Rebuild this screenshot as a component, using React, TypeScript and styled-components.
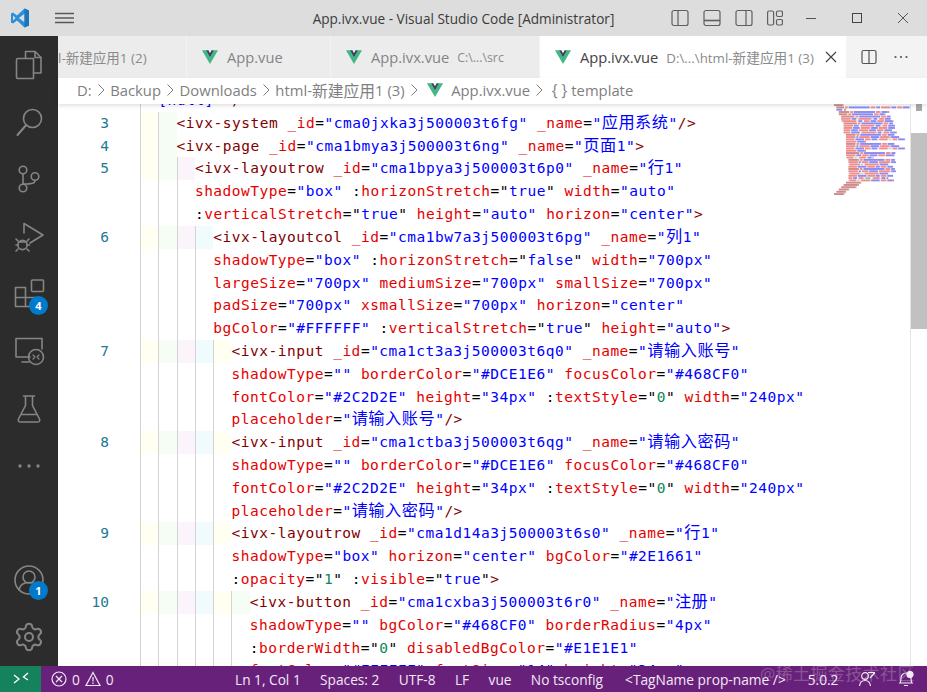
import React from "react";
import styled, { createGlobalStyle } from "styled-components";
import { Settings } from "lucide-react";

const Global = createGlobalStyle`
  html, body { margin: 0; padding: 0; background: #fff; }
  #root { width: 927px; height: 692px; overflow: hidden; }
`;

const UI = `"Open Sans", "Noto Sans CJK SC", sans-serif`;
const MONO = `"DejaVu Sans Mono", "Noto Sans CJK SC", monospace`;

const Root = styled.div`
  width: 927px; height: 692px; display: flex; flex-direction: column;
  font-family: ${UI}; overflow: hidden;
`;
const TitleBar = styled.header`
  height: 36px; flex: none; background: #dddddd; display: flex; align-items: center; position: relative; color: #444;
`;
const Logo = styled.svg`width: 20px; height: 20px; margin: 0 0 0 10px;`;
const Burger = styled.svg`width: 20px; height: 14px; margin-left: 25px;`;
const Title = styled.div`
  position: absolute; left: 0; right: 0; top: 9px; text-align: center; font-size: 13.6px; line-height: 20px; color: #3b3b3b;
`;
const TitleIcons = styled.div`
  margin-left: 596px; display: flex; align-items: center; gap: 14px;
`;
const WinIcons = styled.div`
  margin-left: 22px; display: flex; align-items: center; gap: 34px;
`;
const Main = styled.div`flex: 1; display: flex; min-height: 0;`;
const Activity = styled.nav`
  width: 58px; flex: none; background: #2c2c2c; display: flex; flex-direction: column;
`;
const ActivityItem = styled.div<{ $push?: boolean }>`
  height: 57.4px; flex: none; display: flex; align-items: center; justify-content: center; position: relative;
  margin-top: ${p => (p.$push ? "auto" : "0")}; color: #858585;
`;
const Badge = styled.span`
  position: absolute; left: 29px; top: 30px; width: 19px; height: 19px; border-radius: 50%;
  background: #007acc; color: #fff; font: 700 11px/19px ${UI}; text-align: center;
`;
const Right = styled.div`flex: 1; min-width: 0; display: flex; flex-direction: column;`;
const Tabs = styled.div`
  height: 42px; flex: none; background: #f3f3f3; display: flex; overflow: hidden;
`;
const Tab = styled.div<{ $w: number; $active?: boolean; $flush?: boolean }>`
  width: ${p => p.$w}px; flex: none; display: flex; align-items: center; padding-left: ${p => (p.$flush ? 0 : 14)}px; box-sizing: border-box;
  background: ${p => (p.$active ? "#fff" : "#ececec")};
  border-right: 1px solid #f3f3f3; white-space: nowrap; overflow: hidden;
  color: ${p => (p.$active ? "#444" : "#858585")}; font-size: 14.7px; position: relative;
`;
const ClippedLabel = styled.span`
  font-size: 13.5px; color: #8a8a8a;
`;
const VueMark = styled.svg`width: 18px; height: 18px; flex: none; margin-right: 8px;`;
const TabDetail = styled.span<{ $size: number }>`font-size: ${p => p.$size}px; color: #8a8a8a; margin-left: 8px;`;
const TabClose = styled.svg`width: 14px; height: 14px; margin-left: 10px; flex: none;`;
const TabActions = styled.div`
  flex: 1; display: flex; align-items: center; padding-left: 14px; gap: 16px; background: #f3f3f3;
`;
const Breadcrumb = styled.div`
  height: 26px; flex: none; background: #fff; display: flex; align-items: center; padding-left: 19px; padding-bottom: 2px; box-sizing: border-box;
  font-size: 14.8px; color: #7f7f7f; white-space: nowrap; position: relative; z-index: 2;
  box-shadow: 0 2px 4px rgba(0,0,0,.12);
`;
const Crumb = styled.span`display: inline-flex; align-items: center;`;
const CrumbSep = styled.svg`width: 16px; height: 16px; margin: 0 1.3px 0 1.300px; flex: none;`;
const CrumbVue = styled.svg`width: 18px; height: 18px; margin: 0 7px 0 3px; flex: none;`;
const Braces = styled.span`margin: 0 4px 0 3px; font-size: 15.5px;`;
const Cjk = styled.span<{ $s: number }>`font-size: ${p => p.$s}px;`;
const Editor = styled.div`flex: 1; min-height: 0; overflow: hidden; position: relative; background: #fff;`;
const Lines = styled.div`margin-top: -15px;`;
const Row = styled.div`
  height: 22.82px; display: flex; white-space: pre; font: 14.5px/22.82px ${MONO}; letter-spacing: 0.51px;
`;
const LineNo = styled.div`
  width: 51px; margin-right: 31px; flex: none; text-align: right; color: #237893; letter-spacing: 0;
`;
const Guide = styled.div<{ $tint?: string }>`
  width: 18.3px; flex: none; box-sizing: border-box; border-left: 1px solid #d3d3d3;
  background: ${p => p.$tint || "transparent"};
`;
const Tok = styled.span<{ $k: string }>`
  color: ${p => ({ tag: "#800000", attr: "#e50000", val: "#0000ff", num: "#098658", plain: "#000" } as Record<string, string>)[p.$k]};
`;
const MinimapBox = styled.svg`
  position: absolute; left: 776px; top: 0; width: 76px; height: 100px; z-index: 1; background: #fff; filter: blur(.35px);
`;
const ScrollTrack = styled.div`
  position: absolute; right: 0; top: 0; bottom: 0; width: 17px; box-sizing: border-box; border-left: 1px solid #e4e4e4; background: #fff; z-index: 1;
`;
const ScrollMark = styled.div`position: absolute; left: 5px; top: 0; width: 6px; height: 7px; background: #a9a9a9;`;
const ScrollThumb = styled.div`position: absolute; left: 0; right: 0; top: 29px; height: 196px; background: #c1c1c1;`;
const Status = styled.footer`
  height: 26px; flex: none; background: #68217a; color: #f3e9f5; display: flex; align-items: center;
  font-size: 13.7px; white-space: nowrap; position: relative; z-index: 3;
`;
const Remote = styled.div`
  width: 41px; height: 100%; background: #16825d; display: flex; align-items: center; justify-content: center;
`;
const Problems = styled.div`
  display: flex; align-items: center; gap: 5px; margin-left: 10px; width: 184px; flex: none;
`;
const StatusItem = styled.span<{ $gap?: number }>`margin-right: ${p => p.$gap ?? 19.4}px; display: inline-flex; align-items: center;`;
const TagHint = styled(StatusItem)`font-size: 13.75px;`;
const Watermark = styled.span`
  position: absolute; left: 760px; top: -3px; font-size: 17px; line-height: 22px; color: rgba(255,255,255,.24); letter-spacing: .4px;
`;

const strokeProps = { fill: "none", stroke: "currentColor", strokeWidth: 1.6, strokeLinecap: "round", strokeLinejoin: "round" } as const;

const Vue = () => (
  <>
    <path d="M1 2.500h4.200L9.500 10l4.300-7.500H18L9.500 17 1 2.500Z" fill="#41b883" />
    <path d="M5.200 2.500h2.600L9.500 5.600l1.700-3.100h2.600L9.500 10 5.200 2.500Z" fill="#35495e" />
  </>
);

const Icon = ({ children }: { children: React.ReactNode }) => (
  <svg width="32" height="32" viewBox="0 0 32 32" {...strokeProps}>{children}</svg>
);

const TOP_ICONS: React.ReactNode[] = [
  <Icon><path d="M12.500 9V2.500h9.500l6 6v15.500h-7.500" /><path d="M22 2.500V8.500h6" /><path d="M3.500 11a1.500 1.500 0 0 1 1.500-1.500h15.500V29.500H5A1.500 1.500 0 0 1 3.500 28Z" /></Icon>,
  <Icon><circle cx="19.500" cy="12.500" r="9" /><path d="M13.200 19 4.500 29" strokeWidth="2" /></Icon>,
  <Icon><circle cx="10" cy="7" r="3.800" /><circle cx="22" cy="13.500" r="3.800" /><circle cx="10" cy="25" r="3.800" /><path d="M10 11v10" /><path d="M22 17.500c0 2.500-2 3.500-12 3.500" /></Icon>,
  <Icon><path d="M11 12V2.500L30 14 17 22" /><circle cx="9.500" cy="24" r="4.600" /><path d="M5 20l-2-2M14 20l2-2M3 24h2M14 24h2.500M5 28l-2 2M14 28l2 2M5.500 21h8" /></Icon>,
  <Icon><path d="M2.500 9.500h10v10h10v9h-20Z" /><path d="M2.500 19.500h10v9" /><rect x="18.500" y="2" width="12" height="11.500" rx="1" /></Icon>,
  <Icon><path d="M17 21H3V2.500h26V13" /><path d="M9 26h7" /><circle cx="23" cy="21" r="7.500" /><path d="M20 19l2 2-2 2M26 19l-2 2 2 2" strokeWidth="1.200" /></Icon>,
  <Icon><path d="M10.500 3h11M12.500 3v9.500L5.500 26c-.8 1.600.2 3 2 3h17c1.800 0 2.800-1.400 2-3l-7-13.500V3" /><path d="M8.500 21.500h15" /></Icon>,
  <svg width="32" height="32" viewBox="0 0 32 32" fill="currentColor"><circle cx="7" cy="16" r="1.700" /><circle cx="16" cy="16" r="1.700" /><circle cx="25" cy="16" r="1.700" /></svg>,
];

type Line = { n?: number; i: number; t: string };
const RAW: Line[] = [
  { i: 1, t: `[null]" />` },
  { n: 3, i: 2, t: `<ivx-system _id="cma0jxka3j500003t6fg" _name="应用系统"/>` },
  { n: 4, i: 2, t: `<ivx-page _id="cma1bmya3j500003t6ng" _name="页面1">` },
  { n: 5, i: 3, t: `<ivx-layoutrow _id="cma1bpya3j500003t6p0" _name="行1"` },
  { i: 3, t: `shadowType="box" :horizonStretch="true" width="auto"` },
  { i: 3, t: `:verticalStretch="true" height="auto" horizon="center">` },
  { n: 6, i: 4, t: `<ivx-layoutcol _id="cma1bw7a3j500003t6pg" _name="列1"` },
  { i: 4, t: `shadowType="box" :horizonStretch="false" width="700px"` },
  { i: 4, t: `largeSize="700px" mediumSize="700px" smallSize="700px"` },
  { i: 4, t: `padSize="700px" xsmallSize="700px" horizon="center"` },
  { i: 4, t: `bgColor="#FFFFFF" :verticalStretch="true" height="auto">` },
  { n: 7, i: 5, t: `<ivx-input _id="cma1ct3a3j500003t6q0" _name="请输入账号"` },
  { i: 5, t: `shadowType="" borderColor="#DCE1E6" focusColor="#468CF0"` },
  { i: 5, t: `fontColor="#2C2D2E" height="34px" :textStyle="0" width="240px"` },
  { i: 5, t: `placeholder="请输入账号"/>` },
  { n: 8, i: 5, t: `<ivx-input _id="cma1ctba3j500003t6qg" _name="请输入密码"` },
  { i: 5, t: `shadowType="" borderColor="#DCE1E6" focusColor="#468CF0"` },
  { i: 5, t: `fontColor="#2C2D2E" height="34px" :textStyle="0" width="240px"` },
  { i: 5, t: `placeholder="请输入密码"/>` },
  { n: 9, i: 5, t: `<ivx-layoutrow _id="cma1d14a3j500003t6s0" _name="行1"` },
  { i: 5, t: `shadowType="box" horizon="center" bgColor="#2E1661"` },
  { i: 5, t: `:opacity="1" :visible="true">` },
  { n: 10, i: 6, t: `<ivx-button _id="cma1cxba3j500003t6r0" _name="注册"` },
  { i: 6, t: `shadowType="" bgColor="#468CF0" borderRadius="4px"` },
  { i: 6, t: `:borderWidth="0" disabledBgColor="#E1E1E1"` },
  { i: 6, t: `fontColor="#FFFFFF" fontSize="14" height="34px"` },
];

type T = { k: string; s: string };
function tokenize(line: string): T[] {
  const re = /(<\/?[\w-]+|\/?>|:|[\w]+(?==)|=|"[^"]*"|\[null\]|\s+|.)/g;
  const out: T[] = [];
  let bound = false;
  for (const m of line.match(re) || []) {
    if (/^<|^\/?>$/.test(m)) out.push({ k: "tag", s: m });
    else if (m === ":") { out.push({ k: "plain", s: m }); bound = true; }
    else if (/^\w+$/.test(m)) out.push({ k: "attr", s: m });
    else if (m === "[null]") out.push({ k: "val", s: m });
    else if (/^".*"$/.test(m)) {
      if (bound) {
        const inner = m.slice(1, -1);
        out.push({ k: "plain", s: '"' }, { k: /^\d/.test(inner) ? "num" : "val", s: inner }, { k: "plain", s: '"' });
      } else out.push({ k: "val", s: m });
      bound = false;
    } else out.push({ k: "plain", s: m });
  }
  return out;
}

const withCjk = (s: string, size: number) =>
  s.split(/([\u4e00-\u9fff]+)/).map((part, i) =>
    i % 2 ? <Cjk key={i} $s={size}>{part}</Cjk> : part
  );

const TINTS = ["#fffff2", "#f6fdf4", "#fbf5fb", "#f0fbfd", "#fffff2", "#f6fdf4"];

const TAIL: Line[] = [
  { i: 6, t: `text="注册" :width="240px" :visible="true"/>` },
  { i: 6, t: `:opacity="1" hoverColor="#468CF0" margin="0px"/>` },
  { i: 5, t: `</ivx-layoutrow>` },
  { i: 4, t: `</ivx-layoutcol>` },
  { i: 3, t: `</ivx-layoutrow>` },
  { i: 2, t: `</ivx-page>` },
  { i: 1, t: `</ivx-app>` },
  { i: 0, t: `</template>` },
];
const MINI: Line[] = [
  { i: 0, t: `<template>` },
  { i: 1, t: `<ivx-app _id="cma0jxka3j500003t6f0" _name="应用" shadowType="box" width="700px"` },
  { i: 1, t: `[null]" />` },
  ...RAW.slice(1),
  ...RAW.slice(22),
  ...TAIL,
];
const MINI_COL: Record<string, string> = { tag: "#cf8a8a", attr: "#f08c8c", val: "#8a8af2", num: "#8fc7a8", plain: "#ddd" };

const Minimap = () => {
  const rects: React.ReactNode[] = [];
  MINI.forEach((l, r) => {
    let x = l.i * 2.4;
    tokenize(l.t).forEach((t, j) => {
      const w = t.s.length * 0.95;
      if (t.s.trim()) rects.push(<rect key={`${r}-${j}`} x={x} y={r * 2.28 + 0.2} width={w} height={1.9} fill={MINI_COL[t.k]} />);
      x += w;
    });
  });
  return <MinimapBox viewBox="0 0 76 100">{rects}</MinimapBox>;
};

const Sep = () => (
  <CrumbSep viewBox="0 0 16 16" fill="none" stroke="#7f7f7f" strokeWidth="1"><path d="M5.500 2.500 11 8l-5.500 5.500" /></CrumbSep>
);

export default function App() {
  return (
    <Root>
      <Global />
      <TitleBar>
        <Logo viewBox="0 0 20 20">
          <path d="M14.500 0.600 7 7.500 3 4.500 1 5.500v9l2 1 4-3 7.500 6.900L19 17.500v-15Z" fill="#2a8fdc" />
          <path d="M14.500 5.800 8.800 10l5.700 4.200ZM3 7.400v5.200L5.600 10Z" fill="#dddddd" />
          <path d="M14.500 .6 19 2.500v15l-4.500 1.900Z" fill="#1b75bb" />
        </Logo>
        <Burger viewBox="0 0 20 14" stroke="#5a5a5a" strokeWidth="1.300"><path d="M0 2.500h19M0 7h19M0 11.500h19" /></Burger>
        <Title>App.ivx.vue - Visual Studio Code [Administrator]</Title>
        <TitleIcons>
          <svg width="18" height="18" viewBox="0 0 18 18" fill="none" stroke="#5f5f5f" strokeWidth="1.200"><rect x="1" y="1.500" width="16" height="15" rx="2" /><path d="M7 1.500v15" /></svg>
          <svg width="18" height="18" viewBox="0 0 18 18" fill="none" stroke="#5f5f5f" strokeWidth="1.200"><rect x="1" y="1.500" width="16" height="15" rx="2" /><path d="M1 11.500h16" strokeWidth="1.600" /></svg>
          <svg width="18" height="18" viewBox="0 0 18 18" fill="none" stroke="#5f5f5f" strokeWidth="1.200"><rect x="1" y="1.500" width="16" height="15" rx="2" /><path d="M11 1.500v15" /></svg>
          <svg width="16" height="18" viewBox="0 0 16 18" fill="none" stroke="#5f5f5f" strokeWidth="1.200"><rect x=".6" y="2" width="6" height="14" rx="1.500" /><rect x="9.500" y="2" width="6" height="5.500" rx="1.500" /><rect x="9.500" y="10.500" width="6" height="5.500" rx="1.500" /></svg>
        </TitleIcons>
        <WinIcons>
          <svg width="12" height="12" viewBox="0 0 12 12" stroke="#555" strokeWidth="1"><path d="M1 6.500h10" /></svg>
          <svg width="12" height="12" viewBox="0 0 12 12" fill="none" stroke="#444" strokeWidth="1"><rect x="1.500" y="1.500" width="9" height="9" /></svg>
          <svg width="12" height="12" viewBox="0 0 12 12" stroke="#555" strokeWidth="1"><path d="M1 1l10 10M11 1 1 11" /></svg>
        </WinIcons>
      </TitleBar>
      <Main>
        <Activity>
          {TOP_ICONS.map((ic, i) => (
            <ActivityItem key={i}>
              {ic}
              {i === 4 && <Badge>4</Badge>}
            </ActivityItem>
          ))}
          <ActivityItem $push>
            <Icon><circle cx="16" cy="16" r="14" /><circle cx="16" cy="13" r="6" /><path d="M6 26c1-6 5-7.500 10-7.500s9 1.500 10 7.500" /></Icon>
            <Badge>1</Badge>
          </ActivityItem>
          <ActivityItem><Settings size={32} strokeWidth={1.5} /></ActivityItem>
        </Activity>
        <Right>
          <Tabs>
            <Tab $w={129} $flush><ClippedLabel>l-新建应用1 (2)</ClippedLabel></Tab>
            <Tab $w={144}><VueMark viewBox="0 0 19 19"><Vue /></VueMark>App.vue</Tab>
            <Tab $w={209}><VueMark viewBox="0 0 19 19"><Vue /></VueMark>App.ivx.vue<TabDetail $size={12.3}>C:\...\src</TabDetail></Tab>
            <Tab $w={307} $active>
              <VueMark viewBox="0 0 19 19"><Vue /></VueMark>App.ivx.vue
              <TabDetail $size={13.3}>{withCjk("D:\\...\\html-新建应用1 (3)", 13.7)}</TabDetail>
              <TabClose viewBox="0 0 14 14" stroke="#444" strokeWidth="1.200"><path d="M2 2l10 10M12 2 2 12" /></TabClose>
            </Tab>
            <TabActions>
              <svg width="16" height="16" viewBox="0 0 16 16" fill="none" stroke="#555" strokeWidth="1.200"><rect x="1" y="1.500" width="14" height="13" rx="1.500" /><path d="M8 1.500v13" /></svg>
              <svg width="16" height="16" viewBox="0 0 16 16" fill="#555"><circle cx="2.500" cy="8" r="1.100" /><circle cx="8" cy="8" r="1.100" /><circle cx="13.500" cy="8" r="1.100" /></svg>
            </TabActions>
          </Tabs>
          <Breadcrumb>
            <Crumb>D:</Crumb><Sep />
            <Crumb>Backup</Crumb><Sep />
            <Crumb>Downloads</Crumb><Sep />
            <Crumb>{withCjk("html-新建应用1 (3)", 15.8)}</Crumb><Sep />
            <Crumb><CrumbVue viewBox="0 0 19 19"><Vue /></CrumbVue>App.ivx.vue</Crumb><Sep />
            <Crumb><Braces>{"{ }"}</Braces>template</Crumb>
          </Breadcrumb>
          <Editor>
            <Lines>
              {RAW.map((l, r) => (
                <Row key={r}>
                  <LineNo>{l.n ?? ""}</LineNo>
                  {Array.from({ length: l.i }).map((_, g) => (
                    <Guide key={g} $tint={l.n ? TINTS[g] : undefined} />
                  ))}
                  <span>{tokenize(l.t).map((t, j) => <Tok key={j} $k={t.k}>{withCjk(t.s, 16.2)}</Tok>)}</span>
                </Row>
              ))}
            </Lines>
            <Minimap />
            <ScrollTrack><ScrollMark /><ScrollThumb /></ScrollTrack>
          </Editor>
        </Right>
      </Main>
      <Status>
        <Remote>
          <svg width="16" height="14" viewBox="0 0 16 14" fill="none" stroke="#fff" strokeWidth="1.300"><path d="M1 3l5 4-5 4M15 1 10.500 5l4.500 3" /></svg>
        </Remote>
        <Problems>
          <svg width="16" height="16" viewBox="0 0 16 16" fill="none" stroke="#f3e9f5" strokeWidth="1.200"><circle cx="8" cy="8" r="7" /><path d="M5 5l6 6M11 5l-6 6" /></svg>
          <span>0</span>
          <svg width="16" height="16" viewBox="0 0 16 16" fill="none" stroke="#f3e9f5" strokeWidth="1.200"><path d="M8 1.500 15 14.500H1Z" /><path d="M8 6v4.500M8 11.500v1.500" /></svg>
          <span>0</span>
        </Problems>
        <StatusItem>Ln 1, Col 1</StatusItem>
        <StatusItem>Spaces: 2</StatusItem>
        <StatusItem>UTF-8</StatusItem>
        <StatusItem>LF</StatusItem>
        <StatusItem>vue</StatusItem>
        <StatusItem $gap={22}>No tsconfig</StatusItem>
        <TagHint $gap={22}>{"<TagName prop-name />"}</TagHint>
        <StatusItem $gap={20}>5.0.2</StatusItem>
        <StatusItem $gap={21}>
          <svg width="18" height="16" viewBox="0 0 18 16" fill="none" stroke="#f3e9f5" strokeWidth="1.200"><circle cx="7" cy="5" r="3.300" /><path d="M1.500 15c.5-4 3-5.500 5.500-5.500S12 11 12.500 15M10 1.500h7M17 1.500 12 7" /></svg>
        </StatusItem>
        <StatusItem $gap={0}>
          <svg width="18" height="16" viewBox="0 0 18 16" fill="none" stroke="#f3e9f5" strokeWidth="1.200"><path d="M3 12c1-1 1-3 1-5a5 5 0 0 1 10 0c0 2 0 4 1 5ZM7 14.500h4" /><circle cx="13" cy="3.500" r="3" fill="#f3e9f5" /></svg>
        </StatusItem>
        <Watermark>@稀土掘金技术社区</Watermark>
      </Status>
    </Root>
  );
}
